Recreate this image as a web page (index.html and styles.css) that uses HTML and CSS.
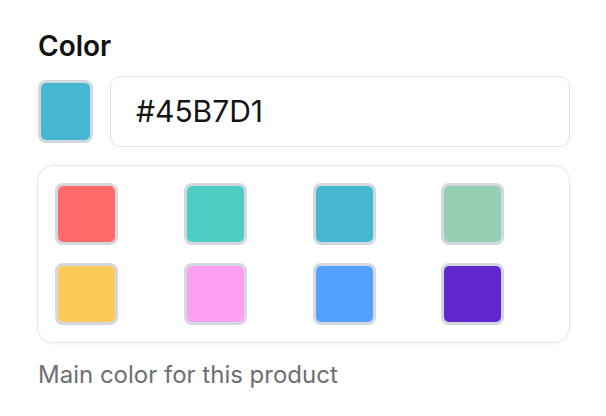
FILE: index.html
```html
<!DOCTYPE html>
<html>
<head>
<meta charset="utf-8">
<link rel="stylesheet" href="styles.css">
</head>
<body>
<div class="field">
  <label class="label">Color</label>
  <div class="input-row">
    <span class="current"><span class="chip" style="background:#45B7D1"></span></span>
    <div class="text-input">#45B7D1</div>
  </div>
  <div class="palette">
    <span class="swatch"><span class="chip" style="background:#FF6B6B"></span></span>
    <span class="swatch"><span class="chip" style="background:#4ECDC4"></span></span>
    <span class="swatch"><span class="chip" style="background:#45B7D1"></span></span>
    <span class="swatch"><span class="chip" style="background:#96CEB4"></span></span>
    <span class="swatch"><span class="chip" style="background:#FECA57"></span></span>
    <span class="swatch"><span class="chip" style="background:#FF9FF3"></span></span>
    <span class="swatch"><span class="chip" style="background:#54A0FF"></span></span>
    <span class="swatch"><span class="chip" style="background:#5F27CD"></span></span>
  </div>
  <p class="help">Main color for this product</p>
</div>
</body>
</html>
```
FILE: styles.css
```css
* { box-sizing: border-box; }
html, body { margin: 0; background: #ffffff; }
body {
  font-family: Inter, "Noto Sans", sans-serif;
  color: #111111;
}
.field {
  width: 570px;
  padding: 28px 0 0 37px;
  display: flex;
  flex-direction: column;
}
.label {
  font-size: 28px;
  font-weight: 600;
  line-height: 36px;
  padding-left: 1px;
}
.input-row {
  margin-top: 12px;
  display: flex;
  align-items: center;
  gap: 17px;
}
.current {
  width: 55px;
  height: 63px;
  margin-left: 1px;
  border: 3px solid #d3d7e0;
  border-radius: 8px;
  display: flex;
  flex-shrink: 0;
}
.chip {
  flex: 1;
  border-radius: 5px;
}
.text-input {
  flex: 1;
  height: 71px;
  border: 1.5px solid #e4e4e6;
  border-radius: 10px;
  font-size: 30px;
  line-height: 68px;
  padding-left: 25px;
  color: #141414;
}
.palette {
  margin-top: 18px;
  border: 1.5px solid #e6e6e8;
  border-radius: 16px;
  box-shadow: 0 1px 3px rgba(0,0,0,0.06);
  padding: 17px 17px 16.5px 17px;
  display: grid;
  grid-template-columns: repeat(4, 1fr);
  column-gap: 18px;
  row-gap: 18px;
  justify-items: start;
}
.swatch {
  width: 63px;
  height: 62px;
  border: 3.5px solid #d3d7e0;
  border-radius: 8px;
  display: flex;
}
.help {
  margin: 18px 0 0 1px;
  font-size: 24px;
  line-height: 28px;
  color: #6e6e72;
}
```
